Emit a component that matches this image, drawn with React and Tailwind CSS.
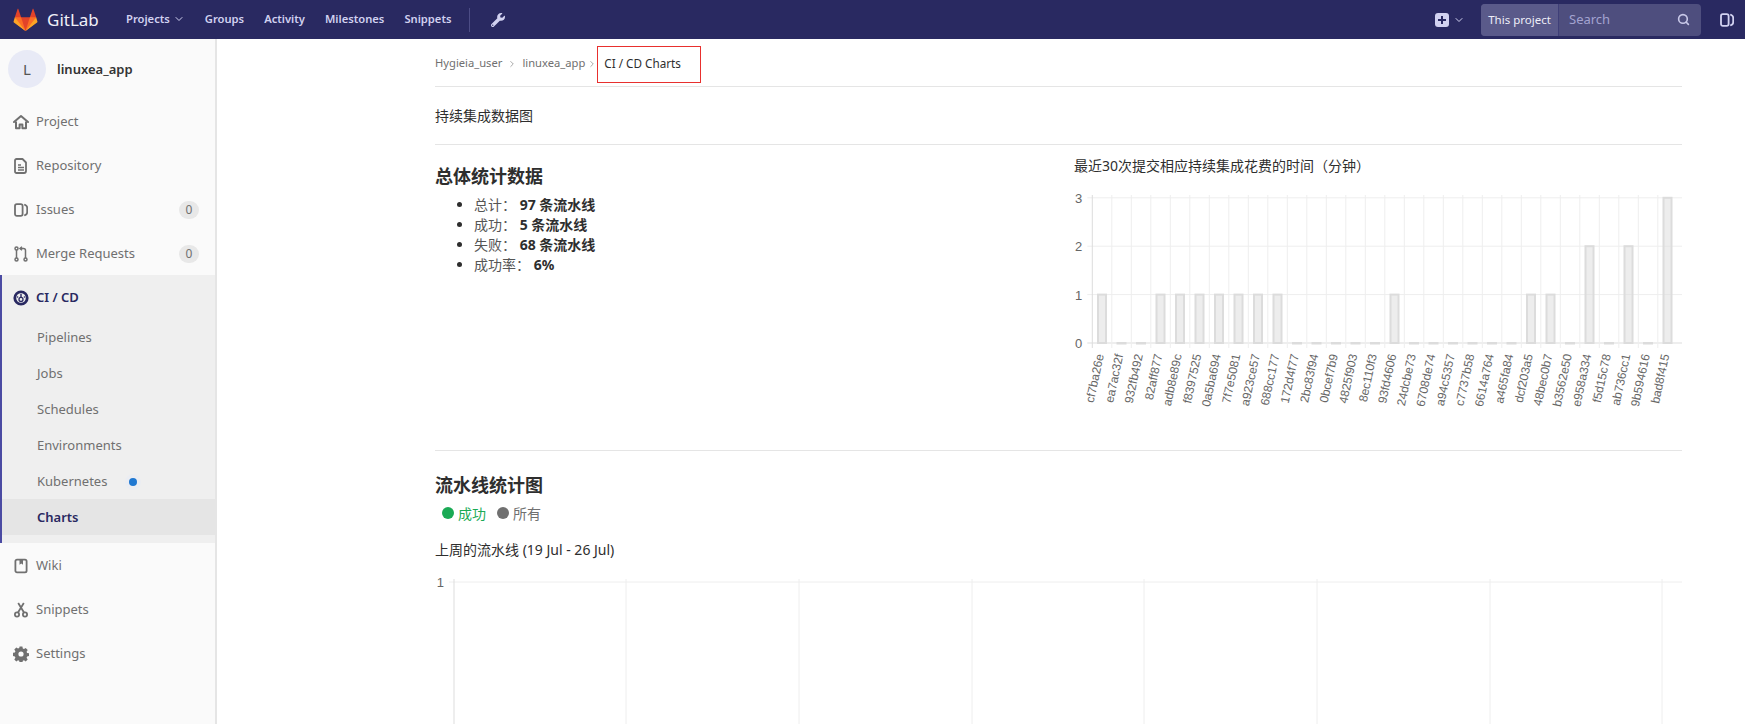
import React from 'react';
import { ChevronDown, ChevronRight, Search } from 'lucide-react';
import { FaWrench } from 'react-icons/fa';

const FONT = { fontFamily: '"Noto Sans", "Noto Sans CJK SC", sans-serif' };

const COMMITS = [
  ['cf7ba26e', 1], ['ea7ac32f', 0], ['932fb492', 0], ['82aff877', 1], ['adb8e89c', 1], ['f8397525', 1],
  ['0a5ba694', 1], ['7f7e5081', 1], ['a923ce57', 1], ['688cc177', 1], ['172d4f77', 0], ['2bc83f94', 0],
  ['0bcef7b9', 0], ['4825f903', 0], ['8ec110f3', 0], ['93fd4606', 1], ['24dcbe73', 0], ['6708de74', 0],
  ['a94c5357', 0], ['c7737b58', 0], ['6614a764', 0], ['a465fa84', 0], ['dcf203a5', 1], ['48bec0b7', 1],
  ['b3562e50', 0], ['e958a334', 2], ['f5d15c78', 0], ['ab736cc1', 2], ['9b594616', 0], ['bad8f415', 3],
];

function Tanuki() {
  return (
    <svg width="25" height="24" viewBox="0 0 36 36">
      <path fill="#e24329" d="M2 14l9.38 9v-9l-4-12.28c-.205-.632-1.176-.632-1.38 0z" />
      <path fill="#e24329" d="M34 14l-9.38 9v-9l4-12.28c.205-.632 1.176-.632 1.38 0z" />
      <path fill="#e24329" d="M18,34.38 3,14 33,14 Z" />
      <path fill="#fc6d26" d="M18,34.38 11.38,14 2,14 6,25Z" />
      <path fill="#fc6d26" d="M18,34.38 24.62,14 34,14 30,25Z" />
      <path fill="#fca326" d="M2 14L.1 20.16c-.18.565 0 1.2.5 1.56l17.42 12.66z" />
      <path fill="#fca326" d="M34 14l1.9 6.16c.18.565 0 1.2-.5 1.56L18 34.38z" />
    </svg>
  );
}

function IssuesIcon({ className }) {
  return (
    <svg className={className} width="14" height="14" viewBox="0 0 14 14" fill="none" stroke="currentColor" strokeWidth="1.8">
      <rect x="1" y="1.2" width="7.6" height="11.6" rx="1.8" />
      <path d="M11 1.8c1.6.6 2.2 1.6 2.2 3v4.4c0 1.4-.6 2.4-2.2 3" strokeLinecap="round" />
    </svg>
  );
}

const HomeIcon = () => (
  <svg width="16" height="16" viewBox="0 0 16 16" fill="none" stroke="currentColor" strokeWidth="2" strokeLinejoin="round">
    <path d="M1 8l7-6 7 6" strokeLinecap="round" />
    <path d="M3 7.5V14.2h3.6v-3.6h2.8v3.6H13V7.5" />
  </svg>
);

const RepoIcon = () => (
  <svg width="16" height="16" viewBox="0 0 16 16" fill="none" stroke="currentColor" strokeWidth="1.8" strokeLinejoin="round">
    <path d="M3.5 1h6l3.5 3.5V13a2 2 0 0 1-2 2H3.5a1.5 1.5 0 0 1-1.5-1.5v-11A1.5 1.5 0 0 1 3.5 1z" />
    <path d="M5 7h3M5 9.5h6M5 12h6" strokeWidth="1.4" />
  </svg>
);

const MergeIcon = () => (
  <svg width="16" height="16" viewBox="0 0 16 16" fill="none" stroke="currentColor" strokeWidth="1.5">
    <circle cx="3.5" cy="13.5" r="1.5" />
    <circle cx="12.5" cy="13.5" r="1.5" />
    <circle cx="3.5" cy="2.5" r="1.5" />
    <path d="M3.5 4v8M12.5 12V4.5c0-1-.6-2-2-2H7.5" />
    <path d="M9 .8L7 2.5l2 1.7" />
  </svg>
);

const PipelineIcon = () => (
  <svg width="16" height="16" viewBox="0 0 16 16">
    <circle cx="8" cy="8" r="6.2" fill="none" stroke="currentColor" strokeWidth="2.8" />
    <circle cx="8" cy="9.4" r="2" fill="none" stroke="currentColor" strokeWidth="1.3" />
    <path d="M8 4v4" stroke="currentColor" strokeWidth="1.4" />
    <circle cx="4.6" cy="7" r=".8" fill="currentColor" />
    <circle cx="11.4" cy="7" r=".8" fill="currentColor" />
  </svg>
);

const WikiIcon = () => (
  <svg width="16" height="16" viewBox="0 0 16 16" fill="none" stroke="currentColor" strokeWidth="1.8">
    <rect x="2.4" y="1.6" width="11.2" height="12.8" rx="1.6" />
    <path d="M6.5 1.6h3.5v5.2L8.25 5.6 6.5 6.8z" fill="currentColor" stroke="none" />
  </svg>
);

const ScissorsIcon = () => (
  <svg width="16" height="16" viewBox="0 0 16 16" fill="none" stroke="currentColor" strokeWidth="1.8">
    <circle cx="4" cy="12.5" r="2.1" />
    <circle cx="12" cy="12.5" r="2.1" />
    <path d="M5 10.5L10.8 1M11 10.5L5.2 1" />
  </svg>
);

const GearIcon = () => (
  <svg width="16" height="16" viewBox="0 0 16 16">
    <path
      fill="currentColor"
      fillRule="evenodd"
      d="M6.6.6h2.8l.4 2 1.2.5 1.7-1.1 2 2-1.1 1.7.5 1.2 2 .4v2.8l-2 .4-.5 1.2 1.1 1.7-2 2-1.7-1.1-1.2.5-.4 2H6.6l-.4-2-1.2-.5-1.7 1.1-2-2 1.1-1.7-.5-1.2-2-.4V6.8l2-.4.5-1.2L1.3 3.5l2-2L5 2.6l1.2-.5zM8 5.4a2.6 2.6 0 1 0 0 5.2 2.6 2.6 0 0 0 0-5.2z"
    />
  </svg>
);

function Header() {
  return (
    <header className="flex h-[39px] shrink-0 items-center bg-[#292961] pl-[13px] text-[11.2px] font-semibold text-[#d1d1f0]">
      <Tanuki />
      <span className="ml-[9px] w-[79px] text-[17px] font-normal text-[#f0f0f8]">GitLab</span>
      <nav className="flex items-center gap-[20px]">
        <span className="flex items-center gap-[3px]">
          Projects <ChevronDown size={12} />
        </span>
        <span>Groups</span>
        <span>Activity</span>
        <span>Milestones</span>
        <span>Snippets</span>
      </nav>
      <div className="ml-[18px] h-[24px] w-px bg-[#4c4c85]" />
      <FaWrench className="ml-[21px]" size={14} />
      <div className="ml-auto flex items-center">
        <span className="grid h-[14px] w-[14px] place-items-center rounded-[3px] bg-[#d1d1f0] text-[#292961]">
          <svg width="8" height="8" viewBox="0 0 8 8">
            <path d="M3 0h2v3h3v2H5v3H3V5H0V3h3z" fill="currentColor" />
          </svg>
        </span>
        <ChevronDown className="ml-[4px]" size={12} />
        <div className="ml-[16px] flex h-[32px] w-[220px] overflow-hidden rounded-[4px] bg-[#4e4e7e]">
          <span className="flex w-[77px] items-center justify-center bg-[#5a5a8a] text-[11.5px] font-normal text-[#eeeef8]">
            This project
          </span>
          <div className="w-px bg-[#3f3f78]" />
          <span className="ml-[10px] flex flex-1 items-center text-[13px] font-normal text-[#a3a3d0]">Search</span>
          <Search className="mr-[11px] mt-[9px]" size={13} strokeWidth={3} color="#c8c8e8" />
        </div>
        <IssuesIcon className="ml-[19px] mr-[11px]" />
      </div>
    </header>
  );
}

function SideItem({ icon, label, count }) {
  return (
    <div className="flex h-[44px] items-center pl-[13px] pr-[16px] pt-[2px] text-[#707070]">
      <span className="grid w-[16px] place-items-center">{icon}</span>
      <span className="ml-[7px] flex-1 text-[13px]">{label}</span>
      {count !== undefined && (
        <span className="grid h-[18px] w-[20px] place-items-center rounded-full bg-[#e8e8e8] text-[12px]">{count}</span>
      )}
    </div>
  );
}

function Sidebar() {
  return (
    <aside className="w-[217px] shrink-0 border-r-2 border-[#e5e5e5] bg-[#fafafa]">
      <div className="flex h-[49px] items-end pl-[8px]">
        <span className="grid h-[38px] w-[38px] place-items-center rounded-full bg-[#e8eaf6] text-[15px] text-[#555]">L</span>
        <span className="mb-[9px] ml-[11px] text-[13px] font-semibold text-[#333]">linuxea_app</span>
      </div>
      <div className="h-[11px]" />
      <SideItem icon={<HomeIcon />} label="Project" />
      <SideItem icon={<RepoIcon />} label="Repository" />
      <SideItem icon={<IssuesIcon />} label="Issues" count="0" />
      <SideItem icon={<MergeIcon />} label="Merge Requests" count="0" />
      <div className="h-[268px] border-l-2 border-[#4b4ba3] bg-[#efefef]">
        <div className="flex h-[44px] items-center pl-[11px] pt-[2px] text-[13px] font-semibold text-[#292961]">
          <PipelineIcon />
          <span className="ml-[7px]">CI / CD</span>
        </div>
        <div className="text-[13px] text-[#707070]">
          {['Pipelines', 'Jobs', 'Schedules', 'Environments'].map((s) => (
            <div key={s} className="flex h-[36px] items-center pl-[35px] pt-[2px]">{s}</div>
          ))}
          <div className="flex h-[36px] items-center pl-[35px] pt-[2px]">
            Kubernetes
            <span className="ml-[22px] h-[8px] w-[8px] rounded-full bg-[#1f78d1] ring-[4px] ring-[#ebedf2]" />
          </div>
          <div className="flex h-[36px] items-center bg-[#e5e5e5] pl-[35px] pt-[2px] font-semibold text-[#292961]">Charts</div>
        </div>
      </div>
      <SideItem icon={<WikiIcon />} label="Wiki" />
      <SideItem icon={<ScissorsIcon />} label="Snippets" />
      <SideItem icon={<GearIcon />} label="Settings" />
    </aside>
  );
}

function CommitChart() {
  const ox = 1092.3 - 1074;
  const step = 19.5;
  const y0 = 153;
  const unit = 48.4;
  const grid = '#eeeeee';
  const svgFont = '"Liberation Sans", Arial, sans-serif';
  return (
    <svg width="608" height="250" className="mt-[14px] block" style={{ fontFamily: svgFont }}>
      {[0, 1, 2, 3].map((v) => (
        <g key={v}>
          <line x1={ox - 5} x2="608" y1={y0 - v * unit} y2={y0 - v * unit} stroke={v === 0 ? '#dddddd' : grid} />
          <text x={ox - 10} y={y0 - v * unit + 5} textAnchor="end" fontSize="13" fill="#666">{v}</text>
        </g>
      ))}
      {COMMITS.map(([sha], i) => (
        <line key={sha} x1={ox + i * step} x2={ox + i * step} y1="5" y2={y0 + 5} stroke={i === 0 ? '#dddddd' : grid} />
      ))}
      {COMMITS.map(([sha, v], i) => {
        const cx = ox + 9.7 + i * step;
        const h = v * unit;
        return (
          <rect key={sha} x={cx - 4} y={y0 - h} width="8" height={Math.max(h, 0.5)} fill="#dcdcdc80" stroke="#dcdcdc" strokeWidth="2" />
        );
      })}
      {COMMITS.map(([sha], i) => {
        const tx = ox + 11.5 + i * step;
        return (
          <text key={sha} transform={`translate(${tx} 165) rotate(-78)`} textAnchor="end" fontSize="12" fill="#666">{sha}</text>
        );
      })}
    </svg>
  );
}

function WeekChart() {
  const xs = [19, 191, 364, 537, 709, 882, 1055, 1227];
  return (
    <svg width="1247" height="150" className="mt-[18px] block overflow-visible" style={{ fontFamily: '"Liberation Sans", Arial, sans-serif' }}>
      <line x1="14" x2="1247" y1="4" y2="4" stroke="#eeeeee" />
      {xs.map((x, i) => (
        <line key={x} x1={x} x2={x} y1="1" y2="150" stroke={i === 0 ? '#dddddd' : '#eeeeee'} />
      ))}
      <text x="9" y="9" textAnchor="end" fontSize="13" fill="#666">1</text>
    </svg>
  );
}

function Stat({ label, value }) {
  return (
    <li className="h-[20px] leading-[20px]">
      <span className="text-[#555]">{label}： </span>
      <strong className="font-bold text-[#2e2e2e]">{value}</strong>
    </li>
  );
}

export default function App() {
  return (
    <div className="flex h-screen flex-col overflow-hidden bg-white text-[14px] text-[#2e2e2e]" style={FONT}>
      <Header />
      <div className="flex min-h-0 flex-1">
        <Sidebar />
        <main className="min-w-0 flex-1 overflow-hidden pl-[218px] pr-[63px]">
          <div className="flex h-[48px] items-center border-b border-[#e5e5e5] pt-[2px] text-[11.2px] text-[#707070]">
            <span>Hygieia_user</span>
            <ChevronRight className="mx-[5px]" size={10} color="#999" />
            <span>linuxea_app</span>
            <ChevronRight className="ml-[2px]" size={10} color="#999" />
            <span className="mt-[2px] flex h-[37px] w-[104px] items-center border border-[#e8302e] pb-[2px] pl-[6px] text-[11.7px] text-[#2e2e2e]">
              CI / CD Charts
            </span>
          </div>
          <div className="flex h-[58px] items-center border-b border-[#e5e5e5]">持续集成数据图</div>
          <div className="flex h-[306px] border-b border-[#e5e5e5]">
            <div className="w-[639px] pt-[17px]">
              <h3 className="h-[28px] text-[18px] font-bold leading-[28px] text-[#2e2e2e]">总体统计数据</h3>
              <ul className="mt-[5px] list-disc pl-[39px]">
                <Stat label="总计" value="97 条流水线" />
                <Stat label="成功" value="5 条流水线" />
                <Stat label="失败" value="68 条流水线" />
                <Stat label="成功率" value="6%" />
              </ul>
            </div>
            <div className="flex-1 pt-[11px]">
              <div className="h-[20px] leading-[20px] text-[#2e2e2e]">最近30次提交相应持续集成花费的时间（分钟）</div>
              <CommitChart />
            </div>
          </div>
          <h3 className="mt-[20px] h-[28px] text-[18px] font-bold leading-[28px]">流水线统计图</h3>
          <div className="mt-[4px] flex h-[20px] items-center pl-[7px] text-[14px]">
            <span className="h-[12px] w-[12px] rounded-full bg-[#1aaa55]" />
            <span className="ml-[4px] text-[#1aaa55]">成功</span>
            <span className="ml-[11px] h-[12px] w-[12px] rounded-full bg-[#707070]" />
            <span className="ml-[4px] text-[#707070]">所有</span>
          </div>
          <div className="mt-[17px] h-[20px] leading-[20px]">上周的流水线 (19 Jul - 26 Jul)</div>
          <WeekChart />
        </main>
      </div>
    </div>
  );
}
